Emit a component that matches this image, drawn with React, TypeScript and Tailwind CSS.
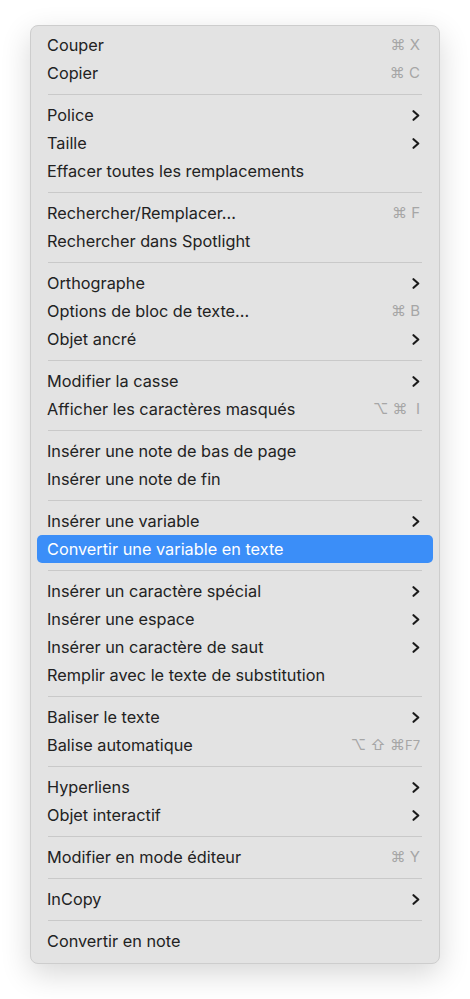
import React from 'react';

type Item =
  | { sep: true }
  | { label: string; shortcut?: React.ReactNode; sub?: boolean; active?: boolean; sep?: false };

const Chevron = () => (
  <svg width="8" height="11" viewBox="0 0 8 11" className="shrink-0">
    <path d="M1.5 1.2 L6.3 5.5 L1.5 9.8" fill="none" stroke="#1a1a1a" strokeWidth="2.1" strokeLinecap="round" strokeLinejoin="round" />
  </svg>
);

const items: Item[] = [
  { label: 'Couper', shortcut: '⌘ X' },
  { label: 'Copier', shortcut: '⌘ C' },
  { sep: true },
  { label: 'Police', sub: true },
  { label: 'Taille', sub: true },
  { label: 'Effacer toutes les remplacements' },
  { sep: true },
  { label: 'Rechercher/Remplacer...', shortcut: '⌘ F' },
  { label: 'Rechercher dans Spotlight' },
  { sep: true },
  { label: 'Orthographe', sub: true },
  { label: 'Options de bloc de texte...', shortcut: '⌘ B' },
  { label: 'Objet ancré', sub: true },
  { sep: true },
  { label: 'Modifier la casse', sub: true },
  { label: 'Afficher les caractères masqués', shortcut: '⌥ ⌘  I' },
  { sep: true },
  { label: 'Insérer une note de bas de page' },
  { label: 'Insérer une note de fin' },
  { sep: true },
  { label: 'Insérer une variable', sub: true },
  { label: 'Convertir une variable en texte', active: true },
  { sep: true },
  { label: 'Insérer un caractère spécial', sub: true },
  { label: 'Insérer une espace', sub: true },
  { label: 'Insérer un caractère de saut', sub: true },
  { label: 'Remplir avec le texte de substitution' },
  { sep: true },
  { label: 'Baliser le texte', sub: true },
  {
    label: 'Balise automatique',
    shortcut: (
      <span>
        ⌥ ⇧ ⌘<span className="text-[13px]">F7</span>
      </span>
    ),
  },
  { sep: true },
  { label: 'Hyperliens', sub: true },
  { label: 'Objet interactif', sub: true },
  { sep: true },
  { label: 'Modifier en mode éditeur', shortcut: '⌘ Y' },
  { sep: true },
  { label: 'InCopy', sub: true },
  { sep: true },
  { label: 'Convertir en note' },
];

const App: React.FC = () => {
  return (
    <div className="min-h-[999px] bg-white pt-[25px] pl-[30px]" style={{ fontFamily: 'Inter, "DejaVu Sans", sans-serif' }}>
      <div className="w-[410px] rounded-[8px] border border-[#cdcdcd] bg-[#e3e3e3] pt-[5px] pb-[8px] shadow-[0_10px_30px_rgba(0,0,0,0.16)]">
        {items.map((it, i) =>
          it.sep ? (
            <div key={i} className="flex h-[14px] items-center px-[17px]">
              <div className="h-px w-full bg-[#c9c9c9]" />
            </div>
          ) : (
            <div
              key={i}
              className={
                'mx-[6px] flex h-[28px] items-center justify-between rounded-[5px] pl-[10px] pr-[13px] text-[16.3px] ' +
                (it.active ? 'bg-[#3b8ef8] text-white' : 'text-[#222222]')
              }
            >
              <span className="whitespace-nowrap">{it.label}</span>
              {it.sub ? (
                <Chevron />
              ) : it.shortcut ? (
                <span className="whitespace-pre text-[15px] text-[#a6a6a6]">{it.shortcut}</span>
              ) : null}
            </div>
          )
        )}
      </div>
    </div>
  );
};

export default App;
